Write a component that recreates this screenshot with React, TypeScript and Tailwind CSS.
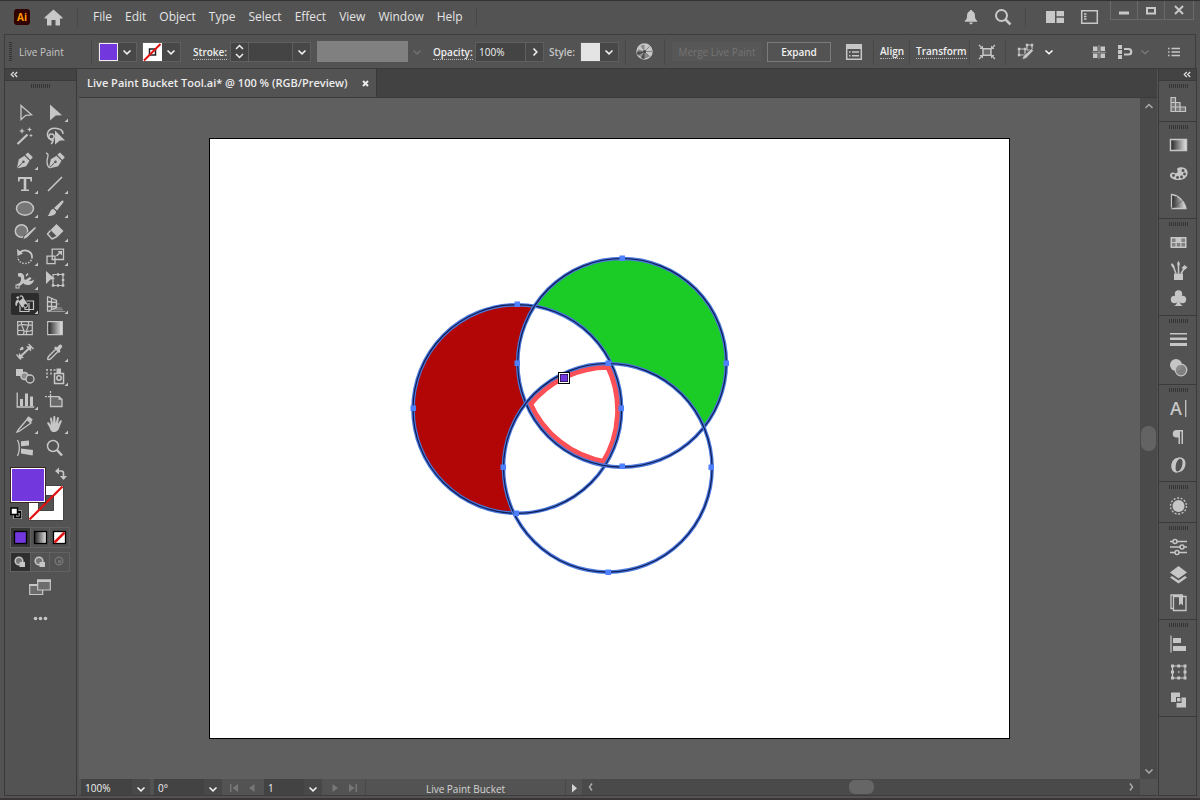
import type { ReactNode } from "react";

const BG = "#535353";

function Icon({ w = 20, h = 20, children }: { w?: number; h?: number; children: ReactNode }) {
  return (
    <svg
      width={w}
      height={h}
      viewBox={`0 0 ${w} ${h}`}
      fill="none"
      stroke="currentColor"
      strokeWidth="1.5"
      className="block shrink-0 overflow-visible"
      aria-hidden="true"
    >
      {children}
    </svg>
  );
}

const solid = { fill: "currentColor", stroke: "none" };

function Chevron({ label, width = "w-[18px]", dim = false, dir = "down" }: { label: string; width?: string; dim?: boolean; dir?: "down" | "right" }) {
  return (
    <button
      aria-label={label}
      disabled={dim}
      className={`flex shrink-0 items-center justify-center self-stretch ${width} ${dim ? "text-[#707070]" : "bg-[#484848] text-[#f0f0f0]"}`}
    >
      <Icon w={10} h={10}>
        <path d={dir === "down" ? "M1.5 3.5L5 6.8L8.5 3.5" : "M3.5 1.5L6.8 5L3.5 8.5"} strokeWidth="1.6" />
      </Icon>
    </button>
  );
}

function Sep({ className = "h-[26px]" }: { className?: string }) {
  return <div className={`w-px shrink-0 bg-[#484848] ${className}`} />;
}

function CollapseMark() {
  return (
    <Icon w={8} h={7}>
      <path d="M3.8 1L1.3 3.5L3.8 6M7.2 1L4.7 3.5L7.2 6" strokeWidth="1.3" />
    </Icon>
  );
}

function Grip() {
  return (
    <svg width="20" height="4" viewBox="0 0 20 4" className="block" aria-hidden="true">
      <path d="M1 0v4M3 0v4M5 0v4M7 0v4M9 0v4M11 0v4M13 0v4M15 0v4M17 0v4M19 0v4" stroke="#353535" strokeWidth="1" transform="translate(.5 0)" />
    </svg>
  );
}

/* ---------- menu bar ---------- */

const menus = ["File", "Edit", "Object", "Type", "Select", "Effect", "View", "Window", "Help"];

function MenuBar() {
  return (
    <header className="flex h-[34px] shrink-0 border-t border-[#333] pl-[14px] pr-[6px] text-[#c8c8c8]">
      <div className="flex flex-1 items-center pb-px">
        <svg width="16" height="16" viewBox="0 0 16 16" aria-label="Illustrator" role="img" className="shrink-0 overflow-visible">
          <rect width="16" height="16" rx="3" fill="#310000" />
          <text x="8" y="11.5" textAnchor="middle" fontFamily="Open Sans, sans-serif" fontWeight="700" fontSize="10" fill="#ff9a00">Ai</text>
        </svg>
        <button aria-label="Home" className="ml-[14px]">
          <Icon w={19} h={17}>
            <path {...solid} d="M9.5 .5L18.5 8.5V9.5H16V16.5H11.5V11H7.5V16.5H3V9.5H.5V8.5Z" />
          </Icon>
        </button>
        <Sep className="ml-[14px] h-[20px]" />
        <nav className="ml-[15px] flex gap-[13px] text-[12px] leading-[18px] text-[#e4e4e4]" aria-label="Main menu">
          {menus.map((m) => (
            <button key={m} className="whitespace-nowrap">{m}</button>
          ))}
        </nav>
        <Sep className="ml-[13px] h-[20px]" />
        <button aria-label="Notifications" className="ml-auto">
          <Icon w={14} h={16}>
            <path {...solid} d="M7 1c.9 0 1.3.6 1.3 1.3C10.600 3 11 5 11 7.500c0 2.200.8 3.100 2.300 4.500v.8H.7V12C2.200 10.600 3 9.700 3 7.500 3 5 3.400 3 5.700 2.300 5.700 1.600 6.100 1 7 1zM5.300 13.500h3.400c0 1.200-.8 1.800-1.700 1.800s-1.700-.6-1.700-1.800z" />
          </Icon>
        </button>
        <button aria-label="Search" className="ml-[16px]">
          <Icon w={18} h={18}>
            <circle cx="7.500" cy="7.500" r="5.500" strokeWidth="2" />
            <path d="M11.500 11.500L16.500 16.500" strokeWidth="2.500" />
          </Icon>
        </button>
        <Sep className="ml-[13px] h-[20px]" />
        <button aria-label="Arrange documents" className="ml-[20px]">
          <Icon w={18} h={12}>
            <path {...solid} d="M0 0h9v12H0zM10.500 0H18v5.300h-7.500zM10.500 6.700H18V12h-7.500z" />
          </Icon>
        </button>
        <button aria-label="Switch workspace" className="ml-[17px]">
          <Icon w={17} h={14}>
            <path d="M.7 .7h15.600v12.600H.7z" />
            <path d="M3 4h2.500M3 6.500h2.500M3 9h2.500" strokeWidth="1.500" />
          </Icon>
        </button>
        <div className="ml-[12px] flex h-[19px] self-start border border-t-0 border-[#696969]">
          <button aria-label="Minimize" className="flex w-[27px] items-center justify-center border-r border-[#696969]">
            <Icon w={12} h={12}><path {...solid} d="M1 7.500h10v3H1z" /></Icon>
          </button>
          <button aria-label="Maximize" className="flex w-[27px] items-center justify-center border-r border-[#696969]">
            <Icon w={12} h={12}><path d="M2 4h8v5.600H2z" strokeWidth="2" /></Icon>
          </button>
          <button aria-label="Close" className="flex w-[28px] items-center justify-center">
            <Icon w={12} h={12}><path d="M2 2L10 10M10 2L2 10" strokeWidth="2" /></Icon>
          </button>
        </div>
      </div>
    </header>
  );
}

/* ---------- control bar ---------- */

function ControlBar() {
  const box = "flex h-[20px] shrink-0 items-stretch border border-[#5f5f5f] bg-[#444]";
  return (
    <section aria-label="Control bar" className="mx-[4px] flex h-[34px] shrink-0 items-center border border-b-0 border-[#3d3d3d] pl-[4px] pr-[15px] text-[10px] leading-[14px] text-[#c6c6c6]">
      <svg width="3" height="19" viewBox="0 0 3 19" className="shrink-0" aria-hidden="true">
        <path d="M1.500 0v19" stroke="#333" strokeWidth="3" strokeDasharray="1 1" />
      </svg>
      <h2 className="ml-[7px] w-[72px] shrink-0 whitespace-nowrap">Live Paint</h2>
      <Sep />
      <div className={`${box} ml-[6px]`}>
        <button aria-label="Fill color" className="w-[19px] border border-[#eee] bg-[#7238de]" />
        <Chevron label="Fill options" />
      </div>
      <div className={`${box} ml-[5px]`}>
        <button aria-label="Stroke color" className="bg-white">
          <Icon w={19} h={18}>
            <path d="M6.500 6h6v6h-6z" stroke="#222" />
            <path d="M1 17.500L17.500 1" stroke="#e01212" strokeWidth="2" />
          </Icon>
        </button>
        <Chevron label="Stroke options" />
      </div>
      <label htmlFor="stroke-w" className="ml-[12px] w-[37px] shrink-0 whitespace-nowrap"><span className="border-b border-dotted border-[#bbb] font-semibold text-[#eee]">Stroke:</span></label>
      <div className={box}>
        <div className="flex w-[17px] flex-col text-[#eee]">
          <button aria-label="Increase stroke" className="flex flex-1 items-center justify-center">
            <Icon w={9} h={6}><path d="M1 5L4.500 1.500L8 5" /></Icon>
          </button>
          <button aria-label="Decrease stroke" className="flex flex-1 items-center justify-center">
            <Icon w={9} h={6}><path d="M1 1L4.500 4.500L8 1" /></Icon>
          </button>
        </div>
        <input id="stroke-w" className="w-[45px] border-x border-[#5f5f5f] bg-[#444] px-1 outline-none" />
        <Chevron label="Stroke weight presets" width="w-[17px]" />
      </div>
      <button aria-label="Variable width profile" disabled className="ml-[6px] h-[21px] w-[91px] shrink-0 bg-[#808080]" />
      <Chevron label="Profile options" dim />
      <label htmlFor="opacity" className="ml-[7px] w-[42px] shrink-0 whitespace-nowrap"><span className="border-b border-dotted border-[#bbb] font-semibold text-[#eee]">Opacity:</span></label>
      <div className={box}>
        <input id="opacity" defaultValue="100%" className="w-[50px] border-r border-[#5f5f5f] bg-[#444] px-[3px] text-[#f2f2f2] outline-none" />
        <Chevron label="Opacity slider" dir="right" width="w-[17px]" />
      </div>
      <span className="ml-[5px] w-[31px] shrink-0 whitespace-nowrap font-semibold">Style:</span>
      <div className={box}>
        <button aria-label="Graphic style" className="w-[19px] bg-[#e4e4e4]" />
        <Chevron label="Style options" />
      </div>
      <Sep className="ml-[6px] h-[26px]" />
      <button aria-label="Recolor artwork" className="ml-[10px]">
        <Icon w={17} h={17}>
          <circle cx="8.500" cy="8.500" r="7.500" fill="#8a8a8a" />
          <path {...solid} d="M8.500 8.500L8.500 1A7.500 7.500 0 0 1 14 3.300zM8.500 8.500L16 8.500A7.500 7.500 0 0 1 14 13.500zM8.500 8.500L14 3.300A7.500 7.500 0 0 1 16 8.500zM8.500 8.500L1.500 6A7.500 7.500 0 0 1 4 2.500z" />
          <path d="M8.500 8.500L8.500 16A7.500 7.500 0 0 1 5 15zM8.500 8.500L1 8.500A7.500 7.500 0 0 0 2 12.500z" fill="#4c4c4c" stroke="none" />
          <path d="M8.500 8.500L13.800 13.800M8.500 8.500L16 8.500M8.500 8.500L13.800 3.200" stroke="#777" strokeWidth=".8" />
          <circle cx="8.500" cy="8.500" r="1.500" fill="#444" stroke="none" />
        </Icon>
      </button>
      <Sep className="ml-[11px] h-[26px]" />
      <button disabled className="ml-[7px] h-[19px] w-[90px] shrink-0 whitespace-nowrap bg-[#575757] text-[#747474]">Merge Live Paint</button>
      <button className="ml-[5px] h-[20px] w-[64px] shrink-0 border border-[#7b7b7b] font-semibold text-[#f0f0f0]">Expand</button>
      <button aria-label="Gap options" className="ml-[15px]">
        <Icon w={16} h={16}>
          <path d="M.7 .7h14.600v14.600H.7z" />
          <path {...solid} d="M0 0h16v5H0zM3 7.300h1.500v1.500H3zM3 11h1.500v1.500H3zM6 7.300h7v1.400H6zM6 11h7v1.400H6z" />
        </Icon>
      </button>
      <Sep className="ml-[11px] h-[26px]" />
      <button className="ml-[6px] shrink-0 border-b border-dotted border-[#bbb] font-semibold text-[#f0f0f0]">Align</button>
      <Sep className="ml-[5px] h-[26px]" />
      <button className="ml-[6px] shrink-0 border-b border-dotted border-[#bbb] font-semibold text-[#f0f0f0]">Transform</button>
      <Sep className="ml-[2px] h-[26px]" />
      <button aria-label="Isolate selected object" className="ml-[8px]">
        <Icon w={18} h={16}>
          <path d="M5 4.800h8v6.400H5z" fill="#6a6a6a" />
          <path d="M1 1l3 3M17 1l-3 3M1 15l3-3M17 15l-3-3" strokeWidth="1.300" />
          <path {...solid} d="M1.500 5H5V1.500zM16.500 5H13V1.500zM1.500 11H5v3.500zM16.500 11H13v3.500z" />
        </Icon>
      </button>
      <Sep className="ml-[9px] h-[26px]" />
      <button aria-label="Select similar objects" className="ml-[11px]">
        <Icon w={17} h={17}>
          <path d="M2 6h6v6H2zM10 2h5v5h-5z" strokeWidth="1.200" />
          <path {...solid} d="M.8 4.800h2.400v2.400H.8zM6.800 4.800h2.400v2.400H6.800zM.8 10.800h2.400v2.400H.8zM8.800 .8h2.400v2.400H8.800zM13.800 .8h2.400v2.400h-2.400z" />
          <path d="M14.500 5.500l2 2.300-7.500 7.700-4 1.300 1.200-3.800z" fill="currentColor" stroke={BG} strokeWidth=".8" />
        </Icon>
      </button>
      <button aria-label="Similar options" className="ml-[8px] flex w-[14px] justify-center text-white">
        <Icon w={10} h={10}><path d="M1.500 3.500L5 6.800L8.500 3.500" /></Icon>
      </button>
      <button aria-label="Snap to grid" className="ml-auto">
        <Icon w={14} h={14}>
          <path {...solid} d="M1 1.500h4.500V6H1zM8.500 1.500H13V6H8.500zM1 8.500h4.500V13H1zM8.500 8.500H13V13H8.500z" />
          <path d="M7 0v14M0 7.250h14" strokeWidth="1" opacity=".6" />
        </Icon>
      </button>
      <button aria-label="Snap to pixel" className="ml-[12px]">
        <Icon w={14} h={14}>
          <path {...solid} d="M0 0h4v4H0zM0 5h4v4H0zM0 10h4v4H0z" />
          <path d="M6 4h4.500a2.500 2.500 0 0 1 0 5.500H6" strokeWidth="2.200" />
        </Icon>
      </button>
      <button aria-label="Snap options" disabled className="ml-[8px] text-[#777]">
        <Icon w={10} h={10}><path d="M1.500 3.500L5 6.800L8.500 3.500" /></Icon>
      </button>
      <button aria-label="Control bar menu" className="ml-[18px]">
        <Icon w={12} h={10}>
          <path d="M0 1.500h1.500M0 5h1.500M0 8.500h1.500M3.500 1.500H12M3.500 5H12M3.500 8.500H12" strokeWidth="1.400" />
        </Icon>
      </button>
    </section>
  );
}

/* ---------- tools panel ---------- */

type Tool = { name: string; fly?: boolean; active?: boolean; art: ReactNode };

const nib = (
  <>
    <path {...solid} d="M7 19.800L8.800 11.200L14.500 7.800L19.500 12.800L16.200 18.200L8.200 20.300Z" />
    <path {...solid} d="M15.300 6.800L18 4.600L22.800 9.200L20.400 12Z" />
    <path d="M7.500 19.800L13 14.200" stroke={BG} strokeWidth="1" />
    <circle cx="13.500" cy="13.700" r="1.200" fill={BG} stroke="none" />
  </>
);

const tools: Tool[] = [
  { name: "Selection", art: <path d="M11 5.500L21.500 14.800L15.800 15.300L11 19.500Z" strokeWidth="1.300" /> },
  { name: "Direct Selection", fly: true, art: <path {...solid} d="M10 4.500L22 15.200L15.800 15.500L10 20.500Z" /> },
  {
    name: "Magic Wand",
    art: (
      <>
        <path d="M7.500 20L17.500 10.500" strokeWidth="2.200" />
        <path {...solid} d="M12 4l.8 2.200L15 7l-2.200.8L12 10l-.8-2.200L9 7l2.200-.8zM19.500 3l.7 1.800 1.800.7-1.800.7-.7 1.800-.7-1.800-1.800-.7 1.800-.7zM21 9.500l.6 1.400 1.400.6-1.400.6-.6 1.400-.6-1.400-1.400-.6 1.400-.6z" />
      </>
    ),
  },
  {
    name: "Lasso",
    art: (
      <>
        <path d="M14 16.500C9 16 7 12.500 7.500 9.500 8.500 5 13 4 17 4.500c4 .5 6 3 6 5.500" />
        <circle cx="11.500" cy="12.500" r="2.600" />
        <path d="M12 15c1 2 .5 4-1 5" />
        <path {...solid} d="M15 6.500L25 16.500L20 16.500L15 20.500Z" />
      </>
    ),
  },
  { name: "Pen", fly: true, art: nib },
  {
    name: "Curvature",
    art: (
      <>
        <g transform="translate(2 0)">{nib}</g>
        <path d="M6 5c4 1 1 5 1 8s1 6 3 7" strokeWidth="1.300" />
      </>
    ),
  },
  { name: "Type", fly: true, art: <path {...solid} d="M8 5h14v4.500h-1.500L20 7h-3.700v10.500H19V19h-8v-1.500h2.700V7H10l-.5 2.500H8z" /> },
  { name: "Line Segment", fly: true, art: <path d="M8 19L22 5" strokeWidth="1.600" /> },
  { name: "Ellipse", fly: true, art: <ellipse cx="15" cy="12.500" rx="8.500" ry="6.700" fill="#777" /> },
  {
    name: "Paintbrush",
    fly: true,
    art: <path {...solid} d="M23 4.500c1 .5.500 1.500-.5 3L17 14.500l-3-2.500 7-6.500c.8-.8 1.500-1.200 2-1zM13.200 12.800l2.900 2.600c0 2.500-2 4.600-8.600 4.600 2.500-1.500 2.200-6.500 5.700-7.200z" />,
  },
  {
    name: "Shaper",
    fly: true,
    art: (
      <>
        <circle cx="11.500" cy="11" r="6.200" fill="#777" />
        <path d="M25 6.500l1.500 1.500L17 18l-4.500 2L14 16z" fill="currentColor" stroke={BG} strokeWidth="1" />
      </>
    ),
  },
  {
    name: "Eraser",
    fly: true,
    art: (
      <>
        <path {...solid} d="M16.500 4L23.500 11L17.500 17L10.500 10Z" />
        <path d="M10.500 10.500L7.500 14L12 19L17 16.500" strokeLinejoin="round" />
      </>
    ),
  },
  {
    name: "Rotate",
    fly: true,
    art: (
      <>
        <path d="M10 8.500C14 4.500 22 6.500 22 13" strokeWidth="1.800" />
        <path d="M22 13C22 17.500 18.500 19.500 15 19.500C11.500 19.500 8 17.500 8 13" strokeDasharray="1.500 1.500" />
        <path {...solid} d="M7 5l.5 7 5.500-2.500z" />
      </>
    ),
  },
  {
    name: "Scale",
    fly: true,
    art: (
      <>
        <path d="M12.200 5.200h11.300v10.300H12.200z" strokeWidth="1.300" />
        <path d="M7 12.200h8v7.500H7z" strokeWidth="1.300" />
        <path d="M16.500 12L20 8.500" />
        <path {...solid} d="M17.500 7H22v4.500z" />
      </>
    ),
  },
  {
    name: "Width",
    fly: true,
    art: (
      <>
        <path {...solid} d="M8 5.500c3-1.500 6.500.5 6.200 4.200-.2 2 .8 2.300 2 1.800L20 9l1.500 1.500L19 13c2 0 3.500 0 5-1.500-.3 3.500-3 5.500-6.500 5.500-2 0-3.500-.8-4.500-2-1 2-3.500 3.500-6 3l-.5-2c2.500 0 4-1.500 4.500-4 .5-2.800-.5-4-3-3.500z" />
        <path d="M16 8l2-2.500M9 16.500l-2.500 3" />
        <rect x="6" y="17" width="3" height="3" fill={BG} strokeWidth="1" />
      </>
    ),
  },
  {
    name: "Free Transform",
    art: (
      <>
        <path d="M13 6.500h10v11H13z" strokeWidth="1.200" />
        <path {...solid} d="M21.800 5.300h2.500v2.500h-2.500zM21.800 16.300h2.500v2.500h-2.500zM11.800 16.300h2.500v2.500h-2.500zM17 16.300h2v2.500h-2zM17 5.300h2v2.500h-2zM21.800 11h2.500v2h-2.500z" />
        <path {...solid} d="M6 3L15 11L10.500 11.500L6 16Z" />
      </>
    ),
  },
  {
    name: "Live Paint Bucket",
    fly: true,
    active: true,
    art: (
      <>
        <path d="M10 11.500h9v8h-9zM15 9h8.500v8.500H15z" strokeWidth="1.200" />
        <path d="M7.800 9.500L13.500 5.500L18.200 12L12 16.200Z" fill="currentColor" stroke="#2c2c2c" strokeWidth=".8" />
        <path {...solid} d="M5.500 13.500C5 10 6 7.500 9 7.500l-.5 2.500-1.200 1.500c0 2.500-1 3-1.800 2zM6 5.500l2-1.500 1.500 1.500-2 1.500z" />
        <path d="M10 4.500c1-1 2.500-.5 2.800.5l.7 3" strokeWidth="1.200" />
        <circle cx="15.500" cy="13.500" r="2" fill="#2c2c2c" strokeWidth="1" />
      </>
    ),
  },
  {
    name: "Perspective Grid",
    fly: true,
    art: (
      <>
        <path d="M7.500 4.500v15M7.500 4.500l9 4v7l-9 4M7.500 9.500l9 1M7.500 14.500h9M11.500 6.500v11" strokeWidth="1.300" />
        <path d="M16.500 12h3M12 16h10M9 19.500h16M13 17.800h10" strokeWidth="1" opacity=".6" />
      </>
    ),
  },
  {
    name: "Mesh",
    art: (
      <path d="M7.700 5.700h14.600v13H7.700zM7.700 10c4-3 9 0 14.600-1M7.700 15c4-3 9 3 14.600-1M12 5.700c-3 4 5 8 1 13M18 5.700c3 4-4 8-1 13" strokeWidth="1.200" />
    ),
  },
  { name: "Gradient", art: <path d="M7.700 5.700h14.600v13H7.700z" fill="url(#bw)" strokeWidth="1.200" /> },
  {
    name: "Measure",
    art: (
      <>
        <path d="M10 17L20 7.500" strokeWidth="1.800" />
        <path {...solid} d="M21.500 6l-.5 5.500-5-5zM8.500 18.500L9 13l5 5z" />
        <path d="M18.500 4l5 5M6.500 14.500l4.500 5M10 10l3-3" strokeWidth="1.300" />
        <circle cx="12" cy="8.500" r="1.500" {...solid} />
      </>
    ),
  },
  {
    name: "Eyedropper",
    fly: true,
    art: (
      <>
        <path d="M16 9L9 16c-.8 1-2 3-1 3.500s2.500-.5 3.500-1.500L18.500 11" strokeWidth="1.400" />
        <path {...solid} d="M14 8l1.500-1.500 1.500.8 2.500-2.600c1.200-1 3.500 1 2.500 2.500L19.800 10l.7 1.500L19 13z" />
      </>
    ),
  },
  {
    name: "Blend",
    art: (
      <>
        <path {...solid} d="M6 5h7v7H6z" />
        <circle cx="14.500" cy="12" r="3.600" fill="#8e8e8e" />
        <circle cx="20" cy="15" r="4" fill={BG} strokeWidth="1.400" />
      </>
    ),
  },
  {
    name: "Symbol Sprayer",
    fly: true,
    art: (
      <>
        <path d="M14.500 9.500h9v10h-9z" />
        <path {...solid} d="M16.500 4.500h4.500V9h-4.500z" />
        <circle cx="19" cy="14" r="2.200" />
        <path {...solid} d="M6 5h2v2H6zM10 5h2v2h-2zM13.500 5h2v2h-2zM6 8.500h2v2H6zM10 8.500h2v2h-2zM6 12h2v2H6z" opacity=".75" />
      </>
    ),
  },
  {
    name: "Column Graph",
    fly: true,
    art: (
      <>
        <path d="M7.200 4.500v14.500h17" strokeWidth="1.300" />
        <path {...solid} d="M10 11h3v7h-3zM15 5.500h3V18h-3zM20 8.500h3V18h-3z" />
      </>
    ),
  },
  {
    name: "Artboard",
    art: (
      <>
        <path d="M10.500 8.700h8.500l3 2.800v7H10.500z" fill="#6a6a6a" strokeWidth="1.300" />
        <path d="M10.500 3v2M10.500 6v2.500M5 8.700h2M8 8.700h2" strokeWidth="1.300" />
        <path {...solid} d="M18.500 8.200l4 3.600h-4z" />
      </>
    ),
  },
  {
    name: "Slice",
    fly: true,
    art: (
      <>
        <path d="M17 7.500l4 3.500L9 19.500l-2 .5 1.500-2.500z" strokeWidth="1.300" />
        <path {...solid} d="M16.500 6.500l2-2.300 4.300 3.300-2 3z" />
      </>
    ),
  },
  {
    name: "Hand",
    fly: true,
    art: <path {...solid} d="M7.300 10.500c1-.6 2 .1 2.700 1.200l1 1.300L10 6.500c0-1.200 1.700-1.300 2 0l1 5 .3-6.500c0-1.300 2-1.300 2 0l.4 6.300 1.300-5.500c.4-1.200 2-.8 1.900.4L18 12l2-3.300c.7-1 2.200-.3 1.700 1L19.500 15c-.7 2.500-2 5-5.500 5-3 0-3.500-2-4.500-4.500-.7-2-2.700-3.500-2.200-5z" />,
  },
  {
    name: "Puppet Warp",
    art: (
      <>
        <path {...solid} d="M11 5.300l8-.8v5l-8 .8zM11 12.500l12 1.500-.3 5.500-11.700-2z" />
        <path d="M7.500 4c2.500 4 2.500 11 0 16" strokeWidth="1.300" />
      </>
    ),
  },
  {
    name: "Zoom",
    art: (
      <>
        <circle cx="13" cy="10" r="5.500" />
        <path d="M17 14L22 19.500" strokeWidth="2.500" />
      </>
    ),
  },
];

function ToolsPanel() {
  return (
    <aside aria-label="Tools" className="flex w-[73px] shrink-0 flex-col border-x border-b border-[#393939] text-[#c6c6c6]">
      <button aria-label="Collapse tools" className="flex h-[12px] items-center border-b border-[#3a3a3a] bg-[#434343] pl-[5px] text-[#ddd]">
        <CollapseMark />
      </button>
      <div className="flex h-[19px] pl-[25px] pt-[3px]"><Grip /></div>
      <div className="ml-[5px] grid w-[60px] grid-cols-2">
        {tools.map((t) => (
          <button key={t.name} aria-label={t.name} className="flex h-[24px] items-start p-0">
            <Icon w={30} h={24}>
              {t.active && <rect x="1" y="1" width="28" height="22" rx="2" fill="#2c2c2c" stroke="none" />}
              {t.art}
              {t.fly && <path {...solid} d="M28 18.500v3.500h-3.500z" />}
            </Icon>
          </button>
        ))}
      </div>
      <div className="relative ml-[5px] mt-[7px] h-[55px] w-[60px]">
        <button aria-label="Stroke" className="absolute left-[18px] top-[18px]">
          <Icon w={36} h={36}>
            <path d="M.5 .5h35v35H.5z" fill="#fff" stroke="#444" strokeWidth="1" />
            <path d="M10.500 10.500h15v15h-15z" fill={BG} stroke="#444" strokeWidth="1" />
            <path d="M1.500 34.500L34.500 1.500" stroke="#e01212" strokeWidth="2.200" />
          </Icon>
        </button>
        <button aria-label="Fill" className="absolute left-0 top-0 h-[36px] w-[36px] border border-[#3b2424] bg-[#7238de] outline-1 -outline-offset-2 outline-white" />
        <button aria-label="Swap fill and stroke" className="absolute right-[3px] top-0">
          <Icon w={12} h={13}>
            <path d="M3.500 4h3c1.500 0 2 1 2 2.500v3" strokeWidth="1.600" />
            <path {...solid} d="M0 4l4-3.500v7zM8.500 13L5 9h7z" />
          </Icon>
        </button>
        <button aria-label="Default fill and stroke" className="absolute bottom-[3px] left-0">
          <Icon w={12} h={12}>
            <path d="M5 5h5.500v5.500H5z" stroke="#ddd" strokeWidth="3" />
            <path d="M5 5h5.500v5.500H5z" stroke="#000" strokeWidth="1.800" />
            <path d="M1 1h6.500v6.500H1z" fill="#fff" stroke="#000" strokeWidth="1.500" />
          </Icon>
        </button>
      </div>
      <div className="ml-[5px] mt-[5px] flex w-[60px] border border-[#616161]">
        {[
          { n: "Color", f: "#7238de" },
          { n: "Gradient fill", f: "url(#bw)" },
          { n: "None", f: "#fff" },
        ].map((m, i) => (
          <button key={m.n} aria-label={m.n} className={`flex h-[19px] flex-1 items-center justify-center ${i === 0 ? "bg-[#363636]" : "border-l border-[#616161]"}`}>
            <Icon w={13} h={13}>
              <rect x=".5" y=".5" width="12" height="12" fill={m.f} stroke="#000" strokeWidth="1.300" />
              {i === 2 && <path d="M1.500 11.500L11.500 1.500" stroke="#e01212" strokeWidth="2.500" />}
            </Icon>
          </button>
        ))}
      </div>
      <div className="ml-[5px] mt-[4px] flex w-[60px] border border-[#616161]">
        {["Draw Normal", "Draw Behind", "Draw Inside"].map((m, i) => (
          <button key={m} aria-label={m} className={`flex h-[18px] flex-1 items-center justify-center ${i === 0 ? "bg-[#2f2f2f]" : "border-l border-[#616161]"} ${i === 2 ? "text-[#747474]" : ""}`}>
            <Icon w={12} h={12}>
              <circle cx="5" cy="5" r="3.800" fill={i < 2 ? "#777" : "none"} />
              {i < 2 ? <path {...solid} d="M5.500 6H11v5H5.500z" /> : <circle cx="5.500" cy="5.500" r="1" />}
            </Icon>
          </button>
        ))}
      </div>
      <button aria-label="Change screen mode" className="mr-px mt-[7px] self-center">
        <Icon w={22} h={17}>
          <path d="M.7 5.500h13v10H.7z" fill="#6c6c6c" strokeWidth="1.200" />
          <path d="M8.700 1h12.600v10H8.700z" fill="#6c6c6c" strokeWidth="1.200" />
          <path {...solid} d="M8 .5h14V3H8zM0 5h8v2H0z" />
        </Icon>
      </button>
      <button aria-label="Edit toolbar" className="mr-px mt-[20px] self-center">
        <Icon w={15} h={5}>
          <circle cx="2.500" cy="2.500" r="1.800" {...solid} />
          <circle cx="7.500" cy="2.500" r="1.800" {...solid} />
          <circle cx="12.500" cy="2.500" r="1.800" {...solid} />
        </Icon>
      </button>
    </aside>
  );
}

/* ---------- right dock ---------- */

const docks: { name: string; art: ReactNode }[][] = [
  [{ name: "Transparency grid", art: <path d="M2 2.500h4.500v5H2zM2 7.500h4.500v4.500H2zM2 12h4.500v4.500H2zM6.500 7.500H11V12H6.500zM6.500 12H11v4.500H6.500zM11 12h5.500v4.500H11z" fill="#777" strokeWidth="1.200" /> }],
  [
    { name: "Gradient panel", art: <path d="M1.500 3.500h16v11h-16z" fill="url(#bw)" /> },
    {
      name: "Color panel",
      art: (
        <>
          <path {...solid} d="M10 3.500c5.500-1.500 9.500 2 8.500 6.500-1 5-6 6.500-11 6-4-.5-7-2.500-6.500-5C1.500 8.500 4 8 5.500 9s4-.5 3-2.500c-.8-1.500-.5-2.500 1.500-3z" />
          <g fill={BG} stroke="none">
            <circle cx="4.500" cy="11.500" r="1.400" /><circle cx="8.500" cy="13.500" r="1.400" /><circle cx="12.500" cy="13" r="1.400" /><circle cx="15.500" cy="10" r="1.400" /><circle cx="14" cy="6.500" r="1.500" />
          </g>
        </>
      ),
    },
    {
      name: "Color guide",
      art: (
        <>
          <path d="M2.500 2.500C9 3 15.500 9 17 16.500H2.500z" fill="url(#bw)" strokeWidth="1.300" />
          <path d="M2.500 16.500L8 4M2.500 16.500L13.500 8.500" stroke="#555" strokeWidth=".7" />
        </>
      ),
    },
  ],
  [
    {
      name: "Swatches",
      art: (
        <>
          <path {...solid} d="M1.500 4h16v11h-16z" />
          <path d="M3 5.500h3.500V9H3zM3 10h3.500v3.500H3zM7.800 10h3.500v3.500H7.800zM12.500 10H16v3.500h-3.500zM12.500 5.500H16V9h-3.500z" fill="#808080" stroke="none" />
        </>
      ),
    },
    {
      name: "Brushes",
      art: (
        <>
          <path {...solid} d="M5 12.500h9V19H5z" />
          <path d="M7 12.500L4.500 6M9.500 12.500V4M12 12.500l3.500-5.500" />
          <path {...solid} d="M2 2.500c2-.5 4 2 3.500 5-2-.5-3.500-2.500-3.500-5zM9.500 0c1.800 2 1.800 4 0 5.500-1.800-1.500-1.800-3.500 0-5.500zM12.500 7l3-3 3 2.500-3 2.500z" />
        </>
      ),
    },
    {
      name: "Symbols",
      art: (
        <>
          <circle cx="9.500" cy="5" r="3.700" {...solid} /><circle cx="5.500" cy="10.500" r="3.700" {...solid} /><circle cx="13.500" cy="10.500" r="3.700" {...solid} />
          <path {...solid} d="M8.800 8h1.400c0 5 .8 7.500 3.800 9H5c3-1.500 3.800-4 3.800-9z" />
        </>
      ),
    },
  ],
  [
    { name: "Stroke panel", art: <path {...solid} d="M1 3h17v1.500H1zM1 7.500h17v2.500H1zM1 13h17v3H1z" /> },
    { name: "Transparency", art: (<><circle cx="7" cy="7" r="6" {...solid} /><circle cx="12" cy="12" r="5.800" fill="#858585" fillOpacity=".9" strokeWidth="1.200" /></>) },
  ],
  [
    { name: "Character", art: (<><text x="1" y="16" fontSize="18" fontFamily="Open Sans, sans-serif" fontWeight="600" fill="currentColor" stroke="none">A</text><path d="M16.700 1v17" strokeWidth="1.300" /></>) },
    { name: "Paragraph", art: <path {...solid} d="M7.500 3H14v14h-1.500V4.500h-1.500V17H9.500v-6.500h-2a3.700 3.700 0 0 1 0-7.500z" /> },
    { name: "OpenType", art: (<><path {...solid} fillRule="evenodd" d="M11 2.500C6 2.500 2.500 6 2.500 11c0 4 2 6.500 5.500 6.500 5 0 8.500-4 8.500-9 0-3.500-2-6-5.500-6zM11.200 3.700c2 .3 2.500 2 2.300 4.500-.4 4.500-2.500 8-5 8.200-2-.3-2.500-2-2.200-4.500.5-4.500 2.500-8 4.900-8.200z" /><path {...solid} d="M11 2.500C6 2.500 2.500 6 2.500 11c0 4 2 6.500 5.500 6.500-3-3-1.500-12 3-15z" /></>) },
  ],
  [{ name: "Appearance", art: (<><circle cx="9.500" cy="10" r="6" {...solid} /><circle cx="9.500" cy="10" r="8" strokeDasharray="2 1.600" strokeWidth="1.300" /></>) }],
  [
    { name: "Properties", art: (<><path d="M1 4.500h17M1 10h17M1 15.500h17" strokeWidth="1.300" /><circle cx="6" cy="4.500" r="2" fill={BG} /><circle cx="13" cy="10" r="2" fill={BG} /><circle cx="8" cy="15.500" r="2" fill={BG} /></>) },
    { name: "Layers", art: (<><path {...solid} d="M9.500 1L18 7.500L9.500 13.500L1 7.500Z" /><path {...solid} d="M3 11L1 12.500L9.500 18.500L18 12.500L16 11L9.500 15.500Z" /></>) },
    { name: "Libraries", art: (<><path d="M4.500 3.500h12.500v14H4.500zM4 15.500H2V2h12" strokeWidth="1.300" /><path {...solid} d="M10 4h4v8.500l-2-2-2 2z" /></>) },
  ],
  [
    { name: "Align panel", art: (<><path {...solid} d="M4 4h8v5H4zM4 12h13v5H4z" /><path d="M2 1.500v17" strokeWidth="1.200" /></>) },
    { name: "Transform panel", art: (<><path d="M3.500 4h12.500v12H3.500z" strokeWidth="1.200" /><path {...solid} d="M2 2.500h3V5.500H2zM8.200 2.500h3V5.500H8.200zM14.500 2.500h3V5.500H14.500zM2 8.500h3V11.500H2zM14.500 8.500h3V11.500H14.500zM2 14.500h3V17.500H2zM8.200 14.500h3V17.500H8.200zM14.500 14.500h3V17.500H14.500zM9 9.300h1.500v1.500H9z" /></>) },
    { name: "Pathfinder", art: (<><path {...solid} d="M2 2.500h9V7H7v5H2zM12.500 7.500H17v10H7.500V13h5z" /><path {...solid} d="M8 8h3.500v3.500H8z" /></>) },
  ],
];

function RightDock() {
  return (
    <aside aria-label="Panels" className="flex w-[39px] shrink-0 flex-col border-x border-b border-[#3a3a3a] text-[#c6c6c6]">
      <button aria-label="Expand panels" className="flex h-[12px] shrink-0 items-center justify-end border-b border-[#3a3a3a] bg-[#434343] pr-[5px] text-[#ddd]">
        <CollapseMark />
      </button>
      {docks.map((g, i) => (
        <div key={i} className="flex shrink-0 flex-col items-center border-b border-[#3a3a3a] pb-[2px] pt-[3px]">
          <Grip />
          <div className="flex w-full flex-col pt-[3px]">
            {g.map((p) => (
              <button key={p.name} aria-label={p.name} className="flex h-[28px] items-center justify-center pl-[2px]">
                <Icon w={19} h={20}>{p.art}</Icon>
              </button>
            ))}
          </div>
        </div>
      ))}
    </aside>
  );
}

/* ---------- document ---------- */

const RED = { cx: 517.3, cy: 409 };
const GREEN = { cx: 622, cy: 362.8 };
const LOWER = { cx: 607.8, cy: 467.8 };
const R = 104.3;
const core = "M610.300 363.800A104.300 104.300 0 0 0 526.500 403.600A104.300 104.300 0 0 0 605.300 465.300A104.300 104.300 0 0 0 610.300 363.800Z";
const anchors = [
  [517, 304], [413, 408], [621, 408], [516, 513], [622, 258], [517, 363], [726, 363], [622, 466], [608, 363], [503, 467], [711, 467], [608, 572],
];

function Artwork() {
  return (
    <svg viewBox="210 139 799 599" className="block h-full w-full" role="img" aria-label="Three overlapping circles">
      <defs>
        <clipPath id="in-green"><circle {...GREEN} r={R} /></clipPath>
        <clipPath id="in-core"><path d={core} /></clipPath>
      </defs>
      <circle {...RED} r={R} fill="#b20606" />
      <circle {...GREEN} r={R} fill="#1acc25" />
      <circle {...RED} r={R} fill="#fff" clipPath="url(#in-green)" />
      <circle {...LOWER} r={R} fill="#fff" />
      <path d={core} fill="none" stroke="#fa5056" strokeWidth="12" clipPath="url(#in-core)" />
      {[RED, GREEN, LOWER].map((c, i) => (
        <g key={i} fill="none">
          <circle {...c} r={R} stroke="#4a78dc" strokeWidth="3.600" />
          <circle {...c} r={R} stroke="#0f1c55" strokeWidth="1.200" />
        </g>
      ))}
      {anchors.map(([x, y]) => (
        <rect key={`${x}-${y}`} x={x - 2.500} y={y - 2.500} width="5.500" height="5.500" fill="#4f80ff" />
      ))}
      <rect x="558" y="372" width="12" height="12" fill="#000" />
      <rect x="559" y="373" width="10" height="10" fill="#fff" />
      <rect x="560" y="374" width="8" height="8" fill="#000" />
      <rect x="560.500" y="374.500" width="7" height="7" fill="#7238de" />
    </svg>
  );
}

function NavArrow({ label, d }: { label: string; d: string }) {
  return (
    <button aria-label={label} disabled className="flex w-[18px] items-center justify-center text-[#777]">
      <Icon w={10} h={10}><path {...solid} d={d} /></Icon>
    </button>
  );
}

function StatusBar() {
  const field = "flex bg-[#434343] text-[#f0f0f0]";
  const input = "min-w-0 flex-1 bg-transparent px-[4px] pt-[3px] outline-none";
  const drop = "flex bg-[#484848] pt-[3px]";
  return (
    <footer className="flex h-[17px] shrink-0 items-stretch border-b border-[#3d3d3d] pl-[2px] text-[10px] leading-[13px] text-[#d4d4d4]">
      <div className={`${field} w-[69px]`}>
        <input aria-label="Zoom level" defaultValue="100%" className={input} />
        <div className={drop}><Chevron label="Zoom presets" /></div>
      </div>
      <div className={`${field} ml-[4px] w-[68px]`}>
        <input aria-label="Rotate view" defaultValue="0°" className={input} />
        <div className={drop}><Chevron label="Rotation presets" /></div>
      </div>
      <div className="flex w-[42px] items-stretch justify-center pt-[2px]">
        <NavArrow label="First artboard" d="M1 1h1.500v8H1zM9 1v8L3.500 5z" />
        <NavArrow label="Previous artboard" d="M7.500 1v8L2 5z" />
      </div>
      <div className={`${field} w-[58px]`}>
        <input aria-label="Artboard" defaultValue="1" className={input} />
        <div className={drop}><Chevron label="Artboard list" /></div>
      </div>
      <div className="flex w-[43px] items-stretch justify-center pt-[2px]">
        <NavArrow label="Next artboard" d="M2.500 1v8L8 5z" />
        <NavArrow label="Last artboard" d="M7.500 1H9v8H7.500zM1 1v8l5.500-4z" />
      </div>
      <p className="flex w-[201px] items-center justify-center whitespace-nowrap border-x border-[#484848] pt-[4px]">Live Paint Bucket</p>
      <button aria-label="Status options" className="flex w-[16px] items-center justify-center pt-[2px]">
        <Icon w={8} h={10}><path {...solid} d="M2 1v8.500L7 5.200z" /></Icon>
      </button>
      <div className="flex flex-1 items-stretch justify-between bg-[#4a4a4a] px-[5px] text-[#aaa]">
        <button aria-label="Scroll left"><Icon w={8} h={10}><path d="M5 1.500L2.500 5L5 8.500" /></Icon></button>
        <div role="scrollbar" aria-label="Horizontal scroll" aria-controls="canvas" aria-valuenow={50} className="my-px h-[14px] w-[25px] rounded-[6px] bg-[#666]" />
        <button aria-label="Scroll right"><Icon w={8} h={10}><path d="M3 1.500L5.500 5L3 8.500" /></Icon></button>
      </div>
      <div className="w-[17px]" />
    </footer>
  );
}

function DocumentArea() {
  return (
    <main className="ml-[2px] mr-px flex min-w-0 flex-1 flex-col">
      <div className="flex h-[29px] shrink-0 border-b border-[#3a3a3a] bg-[#424242]">
        <div className="flex items-center border-r border-[#383838] bg-[#535353] pl-[8px] pr-[7px] text-[11px] font-semibold leading-[16px] text-[#ececec]">
          <h1 className="w-[275px] whitespace-nowrap">Live Paint Bucket Tool.ai* @ 100 % (RGB/Preview)</h1>
          <button aria-label="Close document">
            <Icon w={7} h={7}><path d="M1 1L6 6M6 1L1 6" strokeWidth="2" /></Icon>
          </button>
        </div>
      </div>
      <div className="flex min-h-0 flex-1">
        <div id="canvas" className="flex min-w-0 flex-1 items-center justify-center overflow-hidden bg-[#5f5f5f]">
          <div className="aspect-[801/601] w-[801px] max-w-full shrink-0 border border-black bg-white">
            <Artwork />
          </div>
        </div>
        <div className="flex w-[17px] shrink-0 flex-col items-center justify-between bg-[#4a4a4a] py-[4px] text-[#aaa]">
          <button aria-label="Scroll up"><Icon w={10} h={8}><path d="M1.500 6L5 2.500L8.500 6" /></Icon></button>
          <div role="scrollbar" aria-label="Vertical scroll" aria-controls="canvas" aria-valuenow={50} className="h-[25px] w-[15px] rounded-[7px] bg-[#636363]" />
          <button aria-label="Scroll down"><Icon w={10} h={8}><path d="M1.500 2.500L5 6L8.500 2.500" /></Icon></button>
        </div>
      </div>
      <StatusBar />
    </main>
  );
}

export default function App() {
  return (
    <div className="flex h-screen w-full flex-col overflow-hidden border-b-2 border-[#3a3636] bg-[#535353] font-['Open_Sans','Noto_Sans',sans-serif]">
      <svg width="0" height="0" className="absolute" aria-hidden="true">
        <defs>
          <linearGradient id="bw"><stop offset="0" stopColor="#222" /><stop offset="1" stopColor="#e6e6e6" /></linearGradient>
        </defs>
      </svg>
      <MenuBar />
      <ControlBar />
      <div className="mb-[2px] ml-[4px] mr-[3px] flex min-h-0 flex-1 border-t border-[#3a3a3a]">
        <ToolsPanel />
        <DocumentArea />
        <RightDock />
      </div>
    </div>
  );
}
